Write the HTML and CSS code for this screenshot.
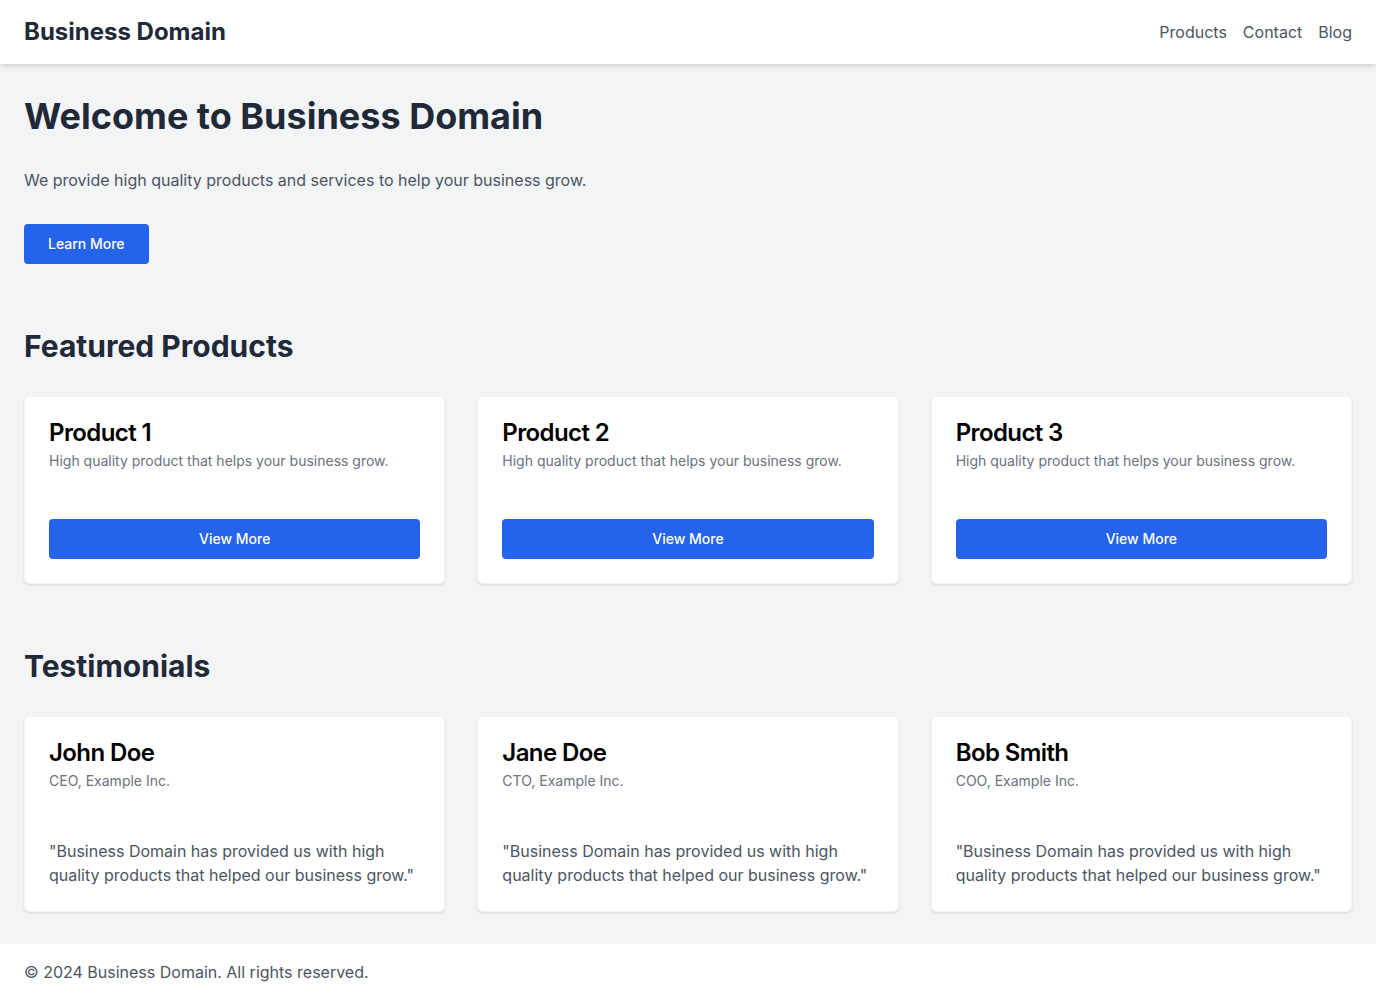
FILE: index.html
```html
<!DOCTYPE html>
<html lang="en">
<head>
<meta charset="utf-8">
<title>Business Domain</title>
<link rel="stylesheet" href="styles.css">
</head>
<body>
<header class="site-header">
  <div class="brand">Business Domain</div>
  <nav class="nav">
    <a href="#">Products</a>
    <a href="#">Contact</a>
    <a href="#">Blog</a>
  </nav>
</header>
<main class="main">
  <section class="hero">
    <h1>Welcome to Business Domain</h1>
    <p class="lead">We provide high quality products and services to help your business grow.</p>
    <a class="btn" href="#">Learn More</a>
  </section>
  <section class="section">
    <h2>Featured Products</h2>
    <div class="grid">
      <div class="card">
        <h3>Product 1</h3>
        <p class="desc">High quality product that helps your business grow.</p>
        <a class="btn btn-block" href="#">View More</a>
      </div>
      <div class="card">
        <h3>Product 2</h3>
        <p class="desc">High quality product that helps your business grow.</p>
        <a class="btn btn-block" href="#">View More</a>
      </div>
      <div class="card">
        <h3>Product 3</h3>
        <p class="desc">High quality product that helps your business grow.</p>
        <a class="btn btn-block" href="#">View More</a>
      </div>
    </div>
  </section>
  <section class="section">
    <h2>Testimonials</h2>
    <div class="grid">
      <div class="card">
        <h3>John Doe</h3>
        <p class="desc">CEO, Example Inc.</p>
        <p class="quote">"Business Domain has provided us with high quality products that helped our business grow."</p>
      </div>
      <div class="card">
        <h3>Jane Doe</h3>
        <p class="desc">CTO, Example Inc.</p>
        <p class="quote">"Business Domain has provided us with high quality products that helped our business grow."</p>
      </div>
      <div class="card">
        <h3>Bob Smith</h3>
        <p class="desc">COO, Example Inc.</p>
        <p class="quote">"Business Domain has provided us with high quality products that helped our business grow."</p>
      </div>
    </div>
  </section>
</main>
<footer class="site-footer">© 2024 Business Domain. All rights reserved.</footer>
</body>
</html>
```
FILE: styles.css
```css
* { box-sizing: border-box; }
html, body { margin: 0; padding: 0; }
body {
  font-family: Inter, "Noto Sans", sans-serif;
  background: #f3f4f6;
  color: #1f2937;
  font-size: 16px;
  line-height: 24px;
}
.site-header {
  background: #fff;
  height: 64px;
  padding: 0 24px;
  display: flex;
  align-items: center;
  justify-content: space-between;
  box-shadow: 0 4px 6px -1px rgba(0,0,0,0.1), 0 2px 4px -1px rgba(0,0,0,0.06);
  position: relative;
}
.brand {
  font-size: 24px;
  line-height: 32px;
  font-weight: 700;
  color: #1f2937;
}
.nav { display: flex; gap: 16px; }
.nav a {
  color: #4b5563;
  text-decoration: none;
  font-size: 16px;
}
.main { padding: 32px 24px; }
.hero h1 {
  margin: 0 0 32px;
  font-size: 36px;
  line-height: 40px;
  font-weight: 700;
  color: #1f2937;
}
.lead {
  margin: 0 0 32px;
  color: #4b5563;
}
.btn {
  display: inline-block;
  background: #2563eb;
  color: #fff;
  text-decoration: none;
  font-size: 14px;
  line-height: 24px;
  padding: 8px 24px;
  border-radius: 4px;
  font-weight: 500;
}
.btn-block { display: block; text-align: center; }
.section { margin-top: 64px; }
.section h2 {
  margin: 0 0 32px;
  font-size: 30px;
  line-height: 36px;
  font-weight: 700;
  color: #1f2937;
}
.grid {
  display: grid;
  grid-template-columns: repeat(3, 1fr);
  gap: 32px;
}
.card {
  background: #fff;
  border: 1px solid #f3f4f6;
  border-radius: 6px;
  padding: 24px;
  box-shadow: 0 1px 3px rgba(0,0,0,0.08), 0 1px 2px rgba(0,0,0,0.05);
}
.card h3 {
  margin: 0 0 6px;
  font-size: 24px;
  line-height: 24px;
  font-weight: 600;
  letter-spacing: -0.6px;
  color: #000;
}
.desc {
  margin: 0 0 48px;
  font-size: 14px;
  line-height: 20px;
  color: #6b7280;
}
.quote {
  margin: 0;
  color: #4b5563;
}
.site-footer {
  background: #fff;
  padding: 16px 24px;
  color: #4b5563;
}
```
